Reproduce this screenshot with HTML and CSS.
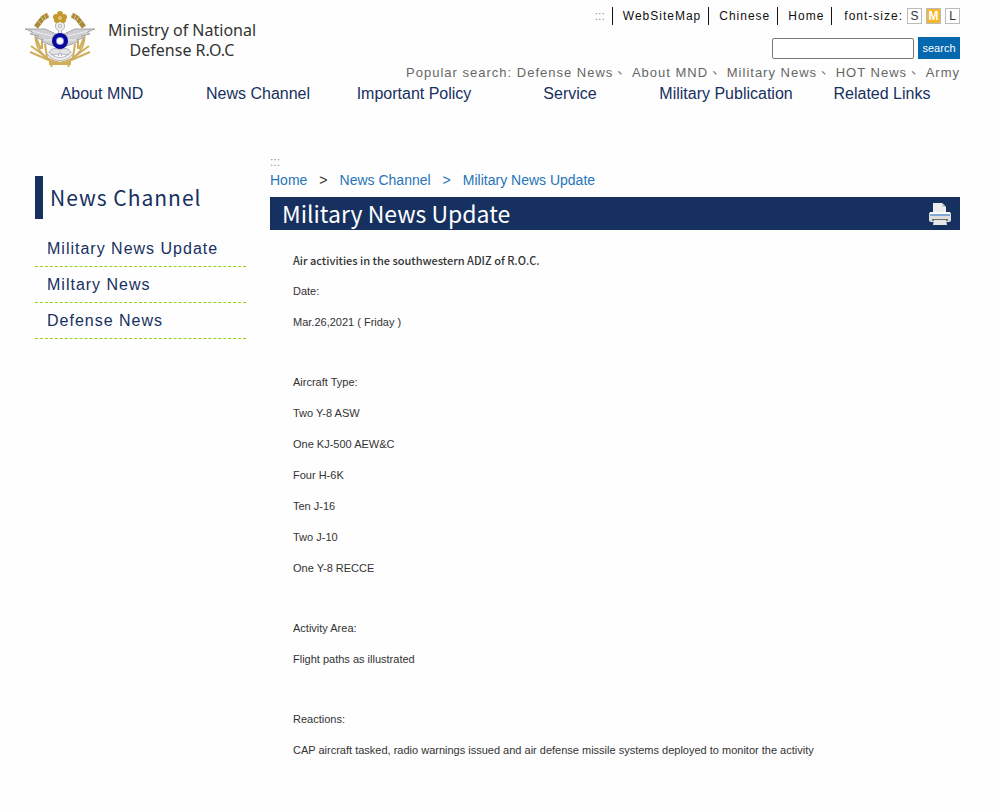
FILE: index.html
```html
<!DOCTYPE html>
<html lang="en">
<head>
    <meta charset="UTF-8">
    <meta name="viewport" content="width=device-width, initial-scale=1.0">
    <title>Military News Update</title>
    <link rel="stylesheet" href="styles.css">
</head>
<body>
    <header class="header">
        <div class="header-row">
            <a class="logo" href="#">
                <svg class="emblem" viewBox="0 0 72 58" aria-hidden="true">
                    <!-- wheat ears -->
                    <g fill="none" stroke="#a98a3c" stroke-width="5">
                        <path d="M24 4 L19 7 L12 16"/>
                        <path d="M48 4 L53 7 L60 16"/>
                    </g>
                    <path d="M23 2 L25 6 M20 4 L22 8 M17 6 L20 10 M14 10 L17 13 M49 2 L47 6 M52 4 L50 8 M55 6 L52 10 M58 10 L55 13" stroke="#dcc684" fill="none"/>
                    <!-- branches -->
                    <g fill="none" stroke="#cfae5c" stroke-width="2">
                        <path d="M12 18 C9 36 18 48 36 52 C54 48 63 36 60 18"/>
                        <path d="M12 27 L17 38 M18 26 L18 38 M7 35 L22 46 M6 41 L27 50 M21 33 L23 46"/>
                        <path d="M60 27 L55 38 M54 26 L54 38 M65 35 L50 46 M66 41 L45 50 M51 33 L49 46"/>
                        <path d="M25 53 L47 51 M25 51 L47 53 M29 51 L27 56 M43 51 L45 56"/>
                    </g>
                    <!-- anchor -->
                    <g fill="none" stroke="#b4b4b8" stroke-width="4">
                        <circle cx="36" cy="15" r="3"/>
                        <path d="M36 18 V45 M24 42 Q29 48 36 48 Q43 48 48 42"/>
                    </g>
                    <g fill="none" stroke="#eeeeef" stroke-width="2">
                        <circle cx="36" cy="15" r="3"/>
                        <path d="M36 18 V45 M24 42 Q29 48 36 48 Q43 48 48 42"/>
                    </g>
                    <path d="M25 41 Q29 35 36 39 Q43 35 47 41 Q43 46 36 42 Q29 46 25 41 Z" fill="#e4e4e6" stroke="#b4b4b8"/>
                    <!-- wings -->
                    <g fill="#cfcfd2" stroke="#a6a6ab" stroke-width="1">
                        <path d="M1 18 L21 18 L34 24 L30 35 L24 33 L18 31 L20 29 L12 27 L15 25 L6 23 L9 21 Z"/>
                        <path d="M71 18 L51 18 L38 24 L42 35 L48 33 L54 31 L52 29 L60 27 L57 25 L66 23 L63 21 Z"/>
                    </g>
                    <path d="M8 20 L28 25 M19 29 L28 29 M64 20 L44 25 M53 29 L44 29" stroke="#ececee" fill="none"/>
                    <!-- plum blossom -->
                    <g fill="#c49a2e">
                        <circle cx="36" cy="3" r="3"/>
                        <circle cx="40" cy="6" r="3"/>
                        <circle cx="39" cy="9" r="3"/>
                        <circle cx="33" cy="9" r="3"/>
                        <circle cx="32" cy="6" r="3"/>
                    </g>
                    <circle cx="36" cy="7" r="2" fill="#e2c470"/>
                    <!-- sun disc -->
                    <circle cx="36" cy="30" r="8" fill="#08089c"/>
                    <circle cx="36" cy="30" r="4" fill="#8f98dc"/>
                    <circle cx="36" cy="30" r="3" fill="#ffffff"/>
                </svg>
                <span class="logo-text">Ministry of National<br>Defense R.O.C</span>
            </a>
            <div class="header-tools">
                <div class="top-links">
                    <a class="access-key" href="#top">:::</a>
                    <a class="top-link" href="#">WebSiteMap</a>
                    <a class="top-link" href="#">Chinese</a>
                    <a class="top-link" href="#">Home</a>
                    <div class="font-size">
                        <span>font-size:</span>
                        <button class="size-button" type="button">S</button>
                        <button class="size-button active" type="button">M</button>
                        <button class="size-button" type="button">L</button>
                    </div>
                </div>
                <form class="search">
                    <input class="search-input" type="text" aria-label="search">
                    <button class="search-button" type="button">search</button>
                </form>
                <div class="popular">Popular search: <a href="#">Defense News</a>、 <a href="#">About MND</a>、 <a href="#">Military News</a>、 <a href="#">HOT News</a>、 <a href="#">Army</a></div>
            </div>
        </div>
        <nav class="nav">
            <a href="#">About MND</a>
            <a href="#">News Channel</a>
            <a href="#">Important Policy</a>
            <a href="#">Service</a>
            <a href="#">Military Publication</a>
            <a href="#">Related Links</a>
        </nav>
    </header>

    <div class="container">
        <aside class="sidebar">
            <h2 class="sidebar-title">News Channel</h2>
            <ul class="sidebar-menu">
                <li><a href="#">Military News Update</a></li>
                <li><a href="#">Miltary News</a></li>
                <li><a href="#">Defense News</a></li>
            </ul>
        </aside>

        <main class="content" id="content">
            <a class="access-key" href="#content">:::</a>
            <div class="breadcrumb">
                <a href="#">Home</a>
                <span>&gt;</span>
                <a href="#">News Channel</a>
                <span class="blue">&gt;</span>
                <a href="#">Military News Update</a>
            </div>
            <div class="title-bar">
                <h1>Military News Update</h1>
                <button class="print-button" type="button" aria-label="Print">
                    <svg viewBox="0 0 22 22" aria-hidden="true">
                        <path d="M4 10 V0 H13 L17 4 V10 Z" fill="#ececec"/>
                        <path d="M13 0 V4 H17 Z" fill="#c9ccd2"/>
                        <rect x="0" y="9" width="22" height="10" rx="2" fill="#dedede"/>
                        <rect x="1" y="9" width="20" height="2" fill="#f7f9fb"/>
                        <rect x="1" y="11" width="20" height="2" fill="#7fa6d4"/>
                        <rect x="3" y="16" width="16" height="2" fill="#6b6b6b"/>
                        <path d="M5 17 H17 L18 22 H4 Z" fill="#e6e6e6"/>
                    </svg>
                </button>
            </div>
            <article class="article">
                <section>
                    <h3>Air activities in the southwestern ADIZ of R.O.C.</h3>
                    <p>Date:</p>
                    <p>Mar.26,2021 ( Friday )</p>
                </section>
                <section>
                    <p>Aircraft Type:</p>
                    <p>Two Y-8 ASW</p>
                    <p>One KJ-500 AEW&amp;C</p>
                    <p>Four H-6K</p>
                    <p>Ten J-16</p>
                    <p>Two J-10</p>
                    <p>One Y-8 RECCE</p>
                </section>
                <section>
                    <p>Activity Area:</p>
                    <p>Flight paths as illustrated</p>
                </section>
                <section>
                    <p>Reactions:</p>
                    <p>CAP aircraft tasked, radio warnings issued and air defense missile systems deployed to monitor the activity</p>
                </section>
            </article>
        </main>
    </div>
</body>
</html>
```
FILE: styles.css
```css
* {
    box-sizing: border-box;
}

body {
    margin: 0;
    background-color: #fefefe;
    color: #333;
    font-family: "Liberation Sans", "Noto Sans CJK TC", Arial, sans-serif;
}

a {
    color: inherit;
    text-decoration: none;
}

button {
    font-family: inherit;
    cursor: pointer;
}

.header {
    padding: 6px 40px 0 24px;
}

.header-row {
    display: flex;
    justify-content: space-between;
    align-items: flex-start;
}

.logo {
    display: flex;
    gap: 12px;
    padding-top: 5px;
}

.emblem {
    width: 72px;
    height: 58px;
}

.logo-text {
    padding-top: 9px;
    font-family: "Noto Sans", sans-serif;
    font-size: 16px;
    line-height: 20px;
    text-align: center;
    color: #333;
}

.header-tools {
    display: flex;
    flex-direction: column;
    align-items: flex-end;
}

.top-links {
    display: flex;
    align-items: center;
    height: 20px;
    font-size: 12px;
    letter-spacing: 1px;
    color: #111;
}

.access-key {
    font-size: 12px;
    letter-spacing: 0;
    color: #8a94a3;
}

.top-links .access-key,
.top-link {
    padding-right: 7px;
    border-right: 1px solid #111;
    line-height: 18px;
}

.top-link {
    padding-left: 10px;
}

.font-size {
    display: flex;
    align-items: center;
    gap: 4px;
    padding-left: 12px;
}

.size-button {
    width: 15px;
    height: 16px;
    padding: 0;
    border: 1px solid #bbb;
    background-color: #fff;
    color: #333;
    font-size: 12px;
    line-height: 14px;
}

.size-button.active {
    background-color: #f5b72c;
    color: #fff;
    font-weight: bold;
}

.search {
    display: flex;
    align-items: center;
    gap: 4px;
    margin-top: 11px;
}

.search-input {
    width: 142px;
    height: 21px;
    border: 1px solid #777;
    border-radius: 2px;
    background-color: #fff;
}

.search-button {
    width: 42px;
    height: 22px;
    padding: 0;
    border: 0;
    background-color: #0567ad;
    color: #fff;
    font-size: 11px;
}

.popular {
    margin-top: 5px;
    font-size: 13px;
    line-height: 18px;
    letter-spacing: 1px;
    color: #666;
}

.nav {
    display: grid;
    grid-template-columns: repeat(6, 1fr);
    text-align: center;
    font-size: 16px;
    line-height: 24px;
    color: #17305f;
}

.container {
    display: flex;
    gap: 24px;
    padding: 48px 40px 40px 35px;
}

.sidebar {
    width: 211px;
    flex-shrink: 0;
    padding-top: 22px;
}

.sidebar-title {
    margin: 0 0 12px;
    padding-left: 7px;
    border-left: 8px solid #16305f;
    font-family: "Noto Sans CJK TC", sans-serif;
    font-size: 21px;
    font-weight: normal;
    line-height: 43px;
    letter-spacing: 1px;
    color: #16305f;
}

.sidebar-menu {
    margin: 0;
    padding: 0;
    list-style: none;
    font-size: 16px;
    letter-spacing: 1px;
    color: #16305f;
}

.sidebar-menu li {
    padding-left: 12px;
    border-bottom: 1px dashed #97d01c;
    line-height: 35px;
}

.content {
    flex: 1;
    min-width: 0;
}

.content .access-key {
    display: block;
    line-height: 16px;
}

.breadcrumb {
    display: flex;
    gap: 12px;
    font-size: 14px;
    line-height: 20px;
    color: #333;
}

.breadcrumb a,
.breadcrumb .blue {
    color: #2774b8;
}

.title-bar {
    display: flex;
    justify-content: space-between;
    align-items: center;
    height: 33px;
    margin-top: 7px;
    padding: 0 9px 0 12px;
    background-color: #16305f;
}

.title-bar h1 {
    margin: 0;
    font-family: "Noto Sans CJK TC", sans-serif;
    font-size: 23px;
    font-weight: normal;
    line-height: 33px;
    color: #fff;
}

.print-button {
    width: 22px;
    height: 22px;
    padding: 0;
    border: 0;
    background: none;
}

.print-button svg {
    display: block;
}

.article {
    padding: 15px 23px;
    font-size: 11px;
    line-height: 31px;
}

.article section + section {
    margin-top: 29px;
}

.article h3 {
    margin: 0;
    font-family: "Noto Sans CJK TC", sans-serif;
    font-size: 11px;
    font-weight: 500;
}

.article p {
    margin: 0;
}
```
